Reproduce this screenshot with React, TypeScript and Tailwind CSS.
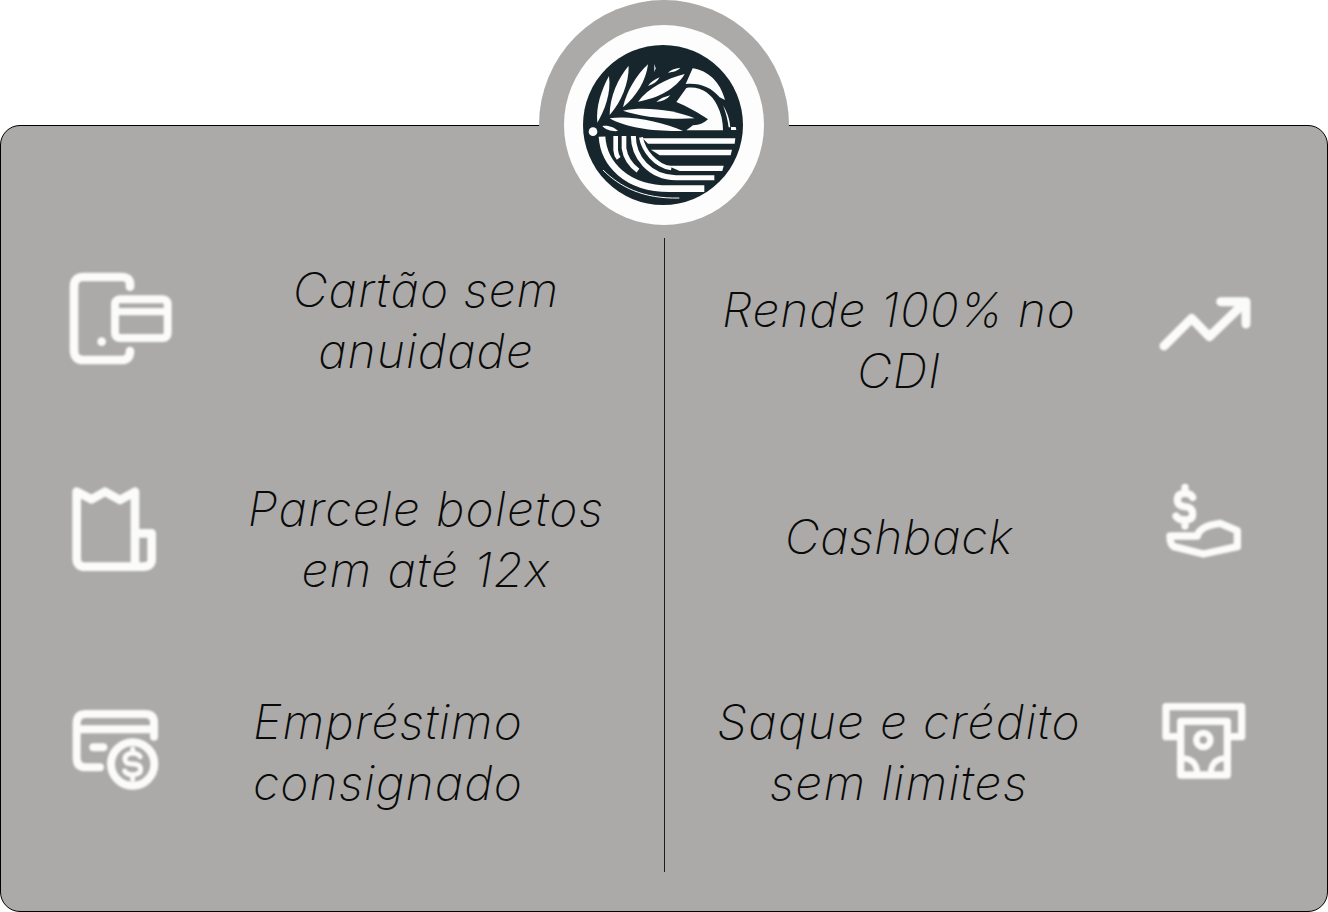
function Logo() {
  return (
    <svg viewBox="160 135 480 480" className="w-40 h-40 mr-[1.5px] blur-[0.4px]">
      <circle cx="400" cy="375" r="240" fill="#17252d" />
      <g fill="#fcfdfc">
        {/* leaves */}
        <path d="M238 228C215 270 198 320 203 368C225 330 245 280 238 228Z" />
        <path d="M297 197C265 235 240 290 240 345C275 305 298 250 297 197Z" />
        <path d="M355 193C320 225 290 275 280 322C320 290 350 240 355 193Z" />
        <path d="M465 222C410 235 355 265 325 305C385 295 440 265 465 222Z" />
        <path d="M374 192L378 205L374 216Z" />
        <path d="M452 203C435 205 422 210 415 218C430 216 445 212 452 203Z" />
        <path d="M390 232C375 238 362 247 355 258C370 254 383 245 390 232Z" />
        <path d="M422 286C405 290 390 296 380 306C397 305 412 298 422 286Z" />
        <path d="M280 332C340 318 440 330 495 355C420 360 330 350 280 332Z" />
        <path d="M240 355C300 345 400 365 460 393C380 395 290 385 240 355Z" />
        <path d="M218 378C235 374 255 382 265 393C248 395 228 390 218 378Z" />
        <circle cx="190" cy="395" r="13" />
        {/* sun */}
        <path d="M489 205C535 212 572 245 586 300L570 292C545 262 510 248 468 252Z" />
        <path d="M470 264C510 257 545 280 562 315C575 340 580 365 580 391H470L490 376C510 375 525 368 535 358C510 340 470 318 440 306Z" />
        <path d="M580 316C592 335 600 358 602 382L597 382C594 358 588 336 580 316Z" />
        <path d="M604 381H618L620 390H604Z" />
        {/* stripes */}
        <path d="M339 415H617L615 431H355Z" />
        <path d="M364 449H607L603 466H390Z" />
        <path d="M414 497H582L578 513H450Z" />
      </g>
      <g fill="none" stroke="#fcfdfc" strokeLinecap="butt">
        <path d="M217 410C222 490 289 566 419 566H524" strokeWidth="20" />
        <path d="M258 408V450Q259 465 267 475" strokeWidth="14" />
        <path d="M283 408V445Q289 485 325 512" strokeWidth="14" />
        <path d="M311 408C311 470 359 532 439 533H554" strokeWidth="15" />
        <path d="M334 412C341 450 375 497 425 505" strokeWidth="12" />
        <path d="M220 510C270 560 340 597 449 594" strokeWidth="3" />
      </g>
    </svg>
  );
}

const iconStroke = {
  fill: 'none',
  stroke: '#fbfbf9',
  strokeLinecap: 'round' as const,
  strokeLinejoin: 'round' as const,
  className: 'blur-[1px]',
};

function PhoneCardIcon() {
  return (
    <svg viewBox="0 0 420 390" width={140} height={130} strokeWidth={26} {...iconStroke}>
      <path d="M240 95V88Q240 66 215 66H100Q72 66 72 95V285Q72 315 100 315H215Q240 315 240 288" />
      <circle cx="155" cy="260" r="13" fill="#fbfbf9" stroke="none" />
      <rect x="195" y="133" width="158" height="116" rx="14" strokeWidth={24} />
      <path d="M200 170H348" strokeWidth={22} strokeLinecap="butt" />
    </svg>
  );
}

function ReceiptIcon() {
  return (
    <svg viewBox="0 0 390 360" width={130} height={120} strokeWidth={26} {...iconStroke}>
      <path d="M80 65L125 88L165 65L210 90L255 65V290H105Q80 290 80 265Z" />
      <path d="M255 190H305V268Q305 290 280 290H255" />
    </svg>
  );
}

function CardCoinIcon() {
  return (
    <svg viewBox="0 0 390 360" width={130} height={120} strokeWidth={24} {...iconStroke}>
      <path d="M312 140V98Q312 72 285 72H108Q80 72 80 100V205Q80 232 108 232H150" />
      <path d="M85 118H310" />
      <path d="M130 172H160" />
      <circle cx="248" cy="222" r="65" />
      <path
        d="M270 200Q265 190 248 190Q225 190 225 208Q225 222 248 222Q272 222 272 238Q272 254 248 254Q230 254 224 243M248 178V190M248 254V268"
        strokeWidth={15}
      />
    </svg>
  );
}

function TrendIcon() {
  return (
    <svg viewBox="0 0 390 300" width={130} height={100} strokeWidth={27} {...iconStroke}>
      <path d="M72 228L155 145L208 200L312 100" />
      <path d="M242 95H318V162" />
    </svg>
  );
}

function HandIcon() {
  return (
    <svg viewBox="0 0 390 300" width={130} height={100} strokeWidth={22} {...iconStroke}>
      <path d="M158 82Q153 70 135 70Q112 70 112 90Q112 108 135 110Q158 112 158 132Q158 150 135 150Q114 150 108 138M135 52V70M135 150V168" />
      <path d="M90 198H172Q178 168 240 160L292 182V230L190 252L102 230Q90 224 90 198Z" />
    </svg>
  );
}

function AtmIcon() {
  return (
    <svg viewBox="0 0 390 300" width={130} height={100} strokeWidth={22} {...iconStroke}>
      <path d="M115 140H78V50H305V140H270" />
      <rect x="122" y="94" width="140" height="161" />
      <circle cx="190" cy="150" r="21" strokeWidth={20} />
      <path d="M130 205Q170 208 172 250M254 205Q214 208 212 250" strokeWidth={18} />
    </svg>
  );
}

function FeatureText({ lines, className }: { lines: string[]; className: string }) {
  return (
    <p className={`shrink-0 text-center text-[48px] leading-[61px] font-extralight italic text-[#0a0a0a] font-['Inter',sans-serif] ${className}`}>
      {lines.map((line) => (
        <span key={line} className="block">
          {line}
        </span>
      ))}
    </p>
  );
}

export default function App() {
  return (
    <div className="w-[1328px] h-[912px] bg-white pt-[125px] overflow-hidden">
      <div className="relative flex h-[787px] rounded-[20px] border border-black bg-[#abaaa8]">
        {/* round badge over the top edge */}
        <div className="absolute left-[538px] -top-[126px] w-[250px] h-[250px] rounded-full bg-[#abaaa8] flex items-center justify-center">
          <div className="w-[200px] h-[200px] rounded-full bg-[#fcfdfc] flex items-center justify-center">
            <Logo />
          </div>
        </div>

        {/* left column */}
        <div className="w-[663px] pt-[133px] pl-[49px] flex flex-col">
          <div className="flex items-center h-[122px]">
            <div className="shrink-0"><PhoneCardIcon /></div>
            <FeatureText lines={['Cartão sem', 'anuidade']} className="w-[472px] tracking-[1px]" />
          </div>
          <div className="flex items-center h-[122px] mt-[97px]">
            <div className="shrink-0 mb-[18px]"><ReceiptIcon /></div>
            <FeatureText lines={['Parcele boletos', 'em até 12x']} className="w-[492px] tracking-[1.3px]" />
          </div>
          <div className="flex items-center h-[122px] mt-[91px]">
            <div className="shrink-0 mb-[4px]"><CardCoinIcon /></div>
            <FeatureText lines={['Empréstimo', 'consignado']} className="w-[416px] tracking-[1.1px]" />
          </div>
        </div>

        <div className="relative w-px h-[634px] mt-[112px] bg-[#1c1c1c]" />

        {/* right column */}
        <div className="flex-1 pt-[153px] flex flex-col">
          <div className="flex items-center h-[122px]">
            <FeatureText lines={['Rende 100% no', 'CDI']} className="w-[468px] tracking-[0.9px]" />
            <div className="ml-[7px] mb-[40px]"><TrendIcon /></div>
          </div>
          <div className="flex items-center h-[122px] mt-[74px]">
            <FeatureText lines={['Cashback']} className="w-[468px] tracking-[0.7px]" />
            <div className="ml-[7px] mb-[32px]"><HandIcon /></div>
          </div>
          <div className="flex items-center h-[122px] mt-[94px]">
            <FeatureText lines={['Saque e crédito', 'sem limites']} className="w-[468px] tracking-[1.3px]" />
            <div className="ml-[7px] mb-[24px]"><AtmIcon /></div>
          </div>
        </div>
      </div>
    </div>
  );
}
